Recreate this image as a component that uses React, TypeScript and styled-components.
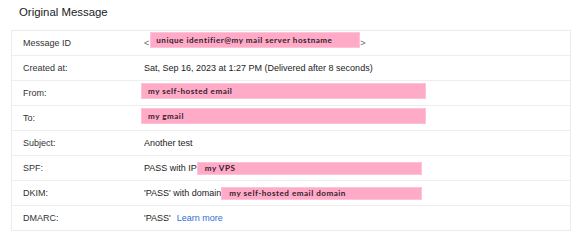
import React from "react";
import styled, { createGlobalStyle } from "styled-components";

const Global = createGlobalStyle`
  html, body { margin: 0; padding: 0; background: #ffffff; }
  body { font-family: "Liberation Sans", Arial, sans-serif; }
`;

const Page = styled.div`
  width: 584px;
  height: 240px;
  box-sizing: border-box;
  padding: 4px 13px 0 11px;
  display: flex;
  flex-direction: column;
`;

const Title = styled.h2`
  margin: 0 0 0 8px;
  height: 26px;
  font-size: 11.4px;
  font-weight: 400;
  line-height: 16px;
  color: #202124;
`;

const Table = styled.div`
  border: 1px solid #ececec;
  box-shadow: 0 0 1px rgba(0, 0, 0, 0.04);
`;

const Row = styled.div`
  display: grid;
  grid-template-columns: 121px 1fr;
  height: 24px;
  & + & {
    border-top: 1px solid #eeeeee;
  }
`;

const Label = styled.div`
  padding-left: 11px;
  display: flex;
  align-items: center;
  font-size: 9px;
  color: #333333;
`;

const Value = styled.div<{ $indent?: number }>`
  padding-left: ${(p) => 11 - (p.$indent ?? 0)}px;
  display: flex;
  align-items: center;
  font-size: 9px;
  color: #222222;
  white-space: pre;
`;

const Redact = styled.span<{ $w: number; $h: number; $up?: number; $pad?: number }>`
  display: inline-flex;
  align-items: center;
  box-sizing: border-box;
  width: ${(p) => p.$w}px;
  height: ${(p) => p.$h}px;
  margin-bottom: ${(p) => (p.$up ?? 0) * 2}px;
  padding-left: ${(p) => p.$pad ?? 5}px;
  background: #ffabc8;
  border: 1px solid #ffc3d8;
  font-family: "Lato", "DejaVu Sans", sans-serif;
  font-weight: 700;
  font-size: 8.1px;
  letter-spacing: 0.5px;
  color: #33202a;
`;

const Punct = styled.span<{ $gap: number }>`
  color: #666666;
  margin-right: ${(p) => p.$gap}px;
`;

const Link = styled.a`
  color: #2f6fd6;
  text-decoration: none;
  margin-left: 6px;
`;

export default function App() {
  return (
    <>
      <Global />
      <Page>
        <Title>Original Message</Title>
        <Table>
          <Row>
            <Label>Message ID</Label>
            <Value>
              <Punct $gap={1}>{"<"}</Punct>
              <Redact $w={210} $h={16} $up={3}>unique identifier@my mail server hostname</Redact>
              <Punct $gap={0}>{">"}</Punct>
            </Value>
          </Row>
          <Row>
            <Label>Created at:</Label>
            <Value>Sat, Sep 16, 2023 at 1:27 PM (Delivered after 8 seconds)</Value>
          </Row>
          <Row>
            <Label>From:</Label>
            <Value $indent={3}>
              <Redact $w={285} $h={16} $up={2} $pad={6}>my self-hosted email</Redact>
            </Value>
          </Row>
          <Row>
            <Label>To:</Label>
            <Value $indent={3}>
              <Redact $w={285} $h={16} $up={2} $pad={6}>my gmail</Redact>
            </Value>
          </Row>
          <Row>
            <Label>Subject:</Label>
            <Value>Another test</Value>
          </Row>
          <Row>
            <Label>SPF:</Label>
            <Value>
              PASS with IP
              <Redact $w={225} $h={13} $pad={7}>my VPS</Redact>
            </Value>
          </Row>
          <Row>
            <Label>DKIM:</Label>
            <Value>
              'PASS' with domain
              <Redact $w={201} $h={13} $pad={7}>my self-hosted email domain</Redact>
            </Value>
          </Row>
          <Row>
            <Label>DMARC:</Label>
            <Value>
              'PASS'
              <Link href="#">Learn more</Link>
            </Value>
          </Row>
        </Table>
      </Page>
    </>
  );
}
